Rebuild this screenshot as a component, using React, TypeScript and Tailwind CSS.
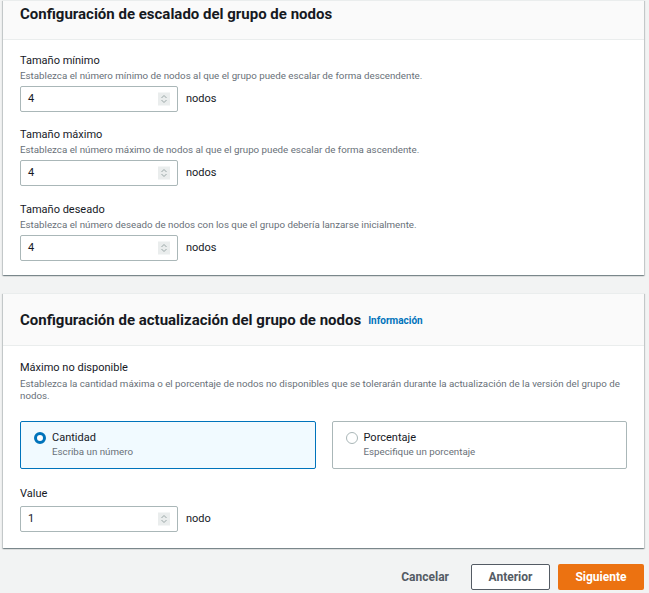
import React from "react";

const font = { fontFamily: '"Roboto", "Liberation Sans", sans-serif' };

function Spinner() {
  return (
    <div className="absolute right-[7px] top-1/2 -translate-y-1/2 w-[12px] h-[13px] bg-[#eaeded] flex flex-col items-center justify-center gap-[1px]">
      <svg width="6" height="4" viewBox="0 0 6 4"><path d="M0.5 3.5 L3 1 L5.5 3.5" fill="none" stroke="#879596" strokeWidth="0.8" /></svg>
      <svg width="6" height="4" viewBox="0 0 6 4"><path d="M0.5 0.5 L3 3 L5.5 0.5" fill="none" stroke="#879596" strokeWidth="0.8" /></svg>
    </div>
  );
}

function NumberField({ value, unit }: { value: string; unit: string }) {
  return (
    <div className="flex items-center gap-[8px]">
      <div className="relative w-[158px] h-[26px] border border-[#aab7b8] rounded-[2px] bg-white flex items-center pl-[7px] text-[11px] text-[#16191f]">
        {value}
        <Spinner />
      </div>
      <span className="text-[11px] text-[#16191f]">{unit}</span>
    </div>
  );
}

function Field({ label, desc, value, unit }: { label: string; desc: string; value: string; unit: string }) {
  return (
    <div className="flex flex-col">
      <div className="text-[11px] leading-[14px] text-[#16191f]">{label}</div>
      <div className="text-[9.75px] leading-[14px] text-[#687078] mt-[1px]">{desc}</div>
      <div className="mt-[3px]">
        <NumberField value={value} unit={unit} />
      </div>
    </div>
  );
}

const cardCls =
  "bg-white border-t border-[#eaeded] shadow-[0_1px_1px_0_rgba(0,28,36,0.3),1px_1px_1px_0_rgba(0,28,36,0.15),-1px_1px_1px_0_rgba(0,28,36,0.15)]";

export default function App() {
  return (
    <div className="w-[649px] h-[593px] overflow-hidden bg-[#f2f3f3] pl-[3px] pr-[5px]" style={font}>
      <div className={cardCls}>
        <div className="bg-[#fafafa] border-b border-[#eaeded] h-[39px] px-[17px] pt-[3px]">
          <h2 className="text-[15px] leading-[20px] font-bold text-[#16191f]">Configuración de escalado del grupo de nodos</h2>
        </div>
        <div className="px-[17px] pt-[14px] pb-[14px] flex flex-col gap-[16px]">
          <Field label="Tamaño mínimo" desc="Establezca el número mínimo de nodos al que el grupo puede escalar de forma descendente." value="4" unit="nodos" />
          <Field label="Tamaño máximo" desc="Establezca el número máximo de nodos al que el grupo puede escalar de forma ascendente." value="4" unit="nodos" />
          <div className="mt-[1px]">
            <Field label="Tamaño deseado" desc="Establezca el número deseado de nodos con los que el grupo debería lanzarse inicialmente." value="4" unit="nodos" />
          </div>
        </div>
      </div>

      <div className={cardCls + " mt-[18px]"}>
        <div className="bg-[#fafafa] border-b border-[#eaeded] h-[52px] px-[17px] flex items-center gap-[7px]">
          <h2 className="text-[15px] leading-[20px] font-bold text-[#16191f]">Configuración de actualización del grupo de nodos</h2>
          <span className="text-[10px] font-bold text-[#0073bb] mt-[2px]">Información</span>
        </div>
        <div className="px-[17px] pt-[15px] pb-[16px] flex flex-col">
          <div className="text-[11px] leading-[14px] text-[#16191f]">Máximo no disponible</div>
          <div className="text-[9.75px] leading-[12px] text-[#687078] mt-[3px] pr-[2px]">
            Establezca la cantidad máxima o el porcentaje de nodos no disponibles que se tolerarán durante la actualización de la versión del grupo de nodos.
          </div>
          <div className="grid grid-cols-2 gap-[16px] mt-[19px]">
            <div className="h-[48px] border border-[#0073bb] bg-[#f1faff] rounded-[2px] flex items-start pl-[13px] pt-[8px] gap-[6px]">
              <div className="w-[12px] h-[12px] rounded-full border-[3.5px] border-[#0073bb] bg-white mt-[2px]" />
              <div className="flex flex-col">
                <span className="text-[11px] leading-[15px] text-[#16191f]">Cantidad</span>
                <span className="text-[9.75px] leading-[14px] text-[#687078]">Escriba un número</span>
              </div>
            </div>
            <div className="h-[48px] border border-[#aab7b8] bg-white rounded-[2px] flex items-start pl-[13px] pt-[8px] gap-[6px]">
              <div className="w-[12px] h-[12px] rounded-full border border-[#aab7b8] bg-white mt-[2px]" />
              <div className="flex flex-col">
                <span className="text-[11px] leading-[15px] text-[#16191f]">Porcentaje</span>
                <span className="text-[9.75px] leading-[14px] text-[#687078]">Especifique un porcentaje</span>
              </div>
            </div>
          </div>
          <div className="text-[11px] leading-[14px] text-[#16191f] mt-[18px]">Value</div>
          <div className="mt-[5px]">
            <NumberField value="1" unit="nodo" />
          </div>
        </div>
      </div>

      <div className="flex justify-end items-center gap-[8px] mt-[16px]">
        <button className="h-[26px] px-[14px] text-[12px] font-bold text-[#545b64]">Cancelar</button>
        <button className="h-[26px] w-[79px] border border-[#545b64] rounded-[2px] bg-white text-[12px] font-bold text-[#545b64]">Anterior</button>
        <button className="h-[26px] w-[86px] rounded-[2px] bg-[#ec7211] text-[12px] font-bold text-white">Siguiente</button>
      </div>
    </div>
  );
}
